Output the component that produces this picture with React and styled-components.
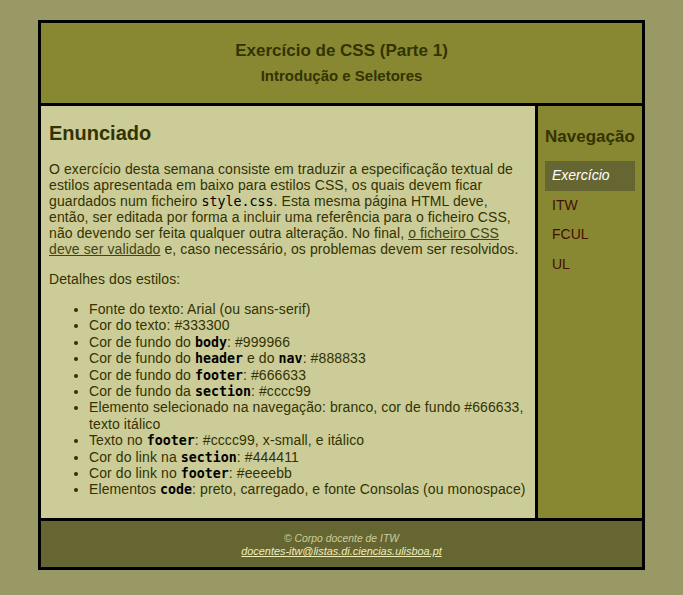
import React from 'react'
import styled, { createGlobalStyle } from 'styled-components'

const GlobalStyle = createGlobalStyle`
  body {
    margin: 20px 0;
    background: #999966;
    color: #333300;
    font-family: "Liberation Sans", Arial, sans-serif;
    font-size: 14px;
  }
`

const styles = [
  ['Fonte do texto: Arial (ou sans-serif)'],
  ['Cor do texto: #333300'],
  ['Cor de fundo do ', ['body'], ': #999966'],
  ['Cor de fundo do ', ['header'], ' e do ', ['nav'], ': #888833'],
  ['Cor de fundo do ', ['footer'], ': #666633'],
  ['Cor de fundo da ', ['section'], ': #cccc99'],
  ['Elemento selecionado na navegação: branco, cor de fundo #666633, texto itálico'],
  ['Texto no ', ['footer'], ': #cccc99, x-small, e itálico'],
  ['Cor do link na ', ['section'], ': #444411'],
  ['Cor do link no ', ['footer'], ': #eeeebb'],
  ['Elementos ', ['code'], ': preto, carregado, e fonte Consolas (ou monospace)'],
]

const navItems = ['Exercício', 'ITW', 'FCUL', 'UL']

const App = () => {
  return (
    <>
      <GlobalStyle />
      <Page>
        <Header>
          <Title>Exercício de CSS (Parte 1)</Title>
          <Subtitle>Introdução e Seletores</Subtitle>
        </Header>
        <Main>
          <Section>
            <Heading>Enunciado</Heading>
            <Para>
              O exercício desta semana consiste em traduzir a especificação textual de
              estilos apresentada em baixo para estilos CSS, os quais devem ficar
              guardados num ficheiro <Code>style.css</Code>. Esta mesma página HTML deve,
              então, ser editada por forma a incluir uma referência para o ficheiro CSS,
              não devendo ser feita qualquer outra alteração. No final,{' '}
              <SectionLink href="#">o ficheiro CSS deve ser validado</SectionLink> e, caso
              necessário, os problemas devem ser resolvidos.
            </Para>
            <Para>Detalhes dos estilos:</Para>
            <List>
              {styles.map((item, i) => (
                <li key={i}>
                  {item.map((part, j) =>
                    Array.isArray(part) ? <Code key={j} $bold>{part[0]}</Code> : part
                  )}
                </li>
              ))}
            </List>
          </Section>
          <Nav>
            <NavTitle>Navegação</NavTitle>
            {navItems.map((item, i) => (
              <NavItem key={item} $selected={i === 0}>{item}</NavItem>
            ))}
          </Nav>
        </Main>
        <Footer>
          <FooterText>© Corpo docente de ITW</FooterText>
          <FooterLink href="#">docentes-itw@listas.di.ciencias.ulisboa.pt</FooterLink>
        </Footer>
      </Page>
    </>
  )
}

export default App

const Page = styled.div`
  width: 601px;
  margin: 0 auto;
  border: 3px solid #000;
`

const Header = styled.header`
  background: #888833;
  border-bottom: 3px solid #000;
  height: 80px;
  display: flex;
  flex-direction: column;
  align-items: center;
  justify-content: center;
  gap: 6px;
`

const Title = styled.h1`
  margin: 0;
  font-size: 17px;
  line-height: 20px;
`

const Subtitle = styled.h2`
  margin: 0;
  font-size: 15px;
  line-height: 18px;
`

const Main = styled.div`
  display: flex;
`

const Section = styled.section`
  width: 497px;
  background: #cccc99;
  border-right: 3px solid #000;
  padding: 0 8px 6px;
  box-sizing: border-box;
  letter-spacing: 0.1px;
`

const Heading = styled.h2`
  font-size: 20px;
  margin: 16px 0;
  letter-spacing: 0;
`

const Para = styled.p`
  margin: 14px 0;
  line-height: 16px;
`

const Code = styled.code`
  font-family: "DejaVu Sans Mono", "Liberation Mono", monospace;
  font-size: 13.3px;
  line-height: 0;
  letter-spacing: 0;
  color: #000;
  font-weight: ${p => (p.$bold ? 'bold' : 'normal')};
`

const SectionLink = styled.a`
  color: #444411;
`

const List = styled.ul`
  margin: 14px 0;
  padding-left: 40px;
  line-height: 16.4px;
`

const Nav = styled.nav`
  width: 104px;
  background: #888833;
  padding: 0 7px;
  box-sizing: border-box;
`

const NavTitle = styled.h3`
  font-size: 17px;
  margin: 21px 0 14px;
`

const NavItem = styled.div`
  padding: 7px;
  line-height: 15.7px;
  color: ${p => (p.$selected ? '#fff' : '#440e00')};
  background: ${p => (p.$selected ? '#666633' : 'transparent')};
  font-style: ${p => (p.$selected ? 'italic' : 'normal')};
`

const Footer = styled.footer`
  background: #666633;
  border-top: 3px solid #000;
  height: 49px;
  padding-top: 3px;
  box-sizing: border-box;
  display: flex;
  flex-direction: column;
  align-items: center;
  justify-content: center;
  font-style: italic;
  line-height: 13px;
`

const FooterText = styled.div`
  color: #cccc99;
  font-size: 10.4px;
`

const FooterLink = styled.a`
  color: #eeeebb;
  font-size: 10.9px;
`
